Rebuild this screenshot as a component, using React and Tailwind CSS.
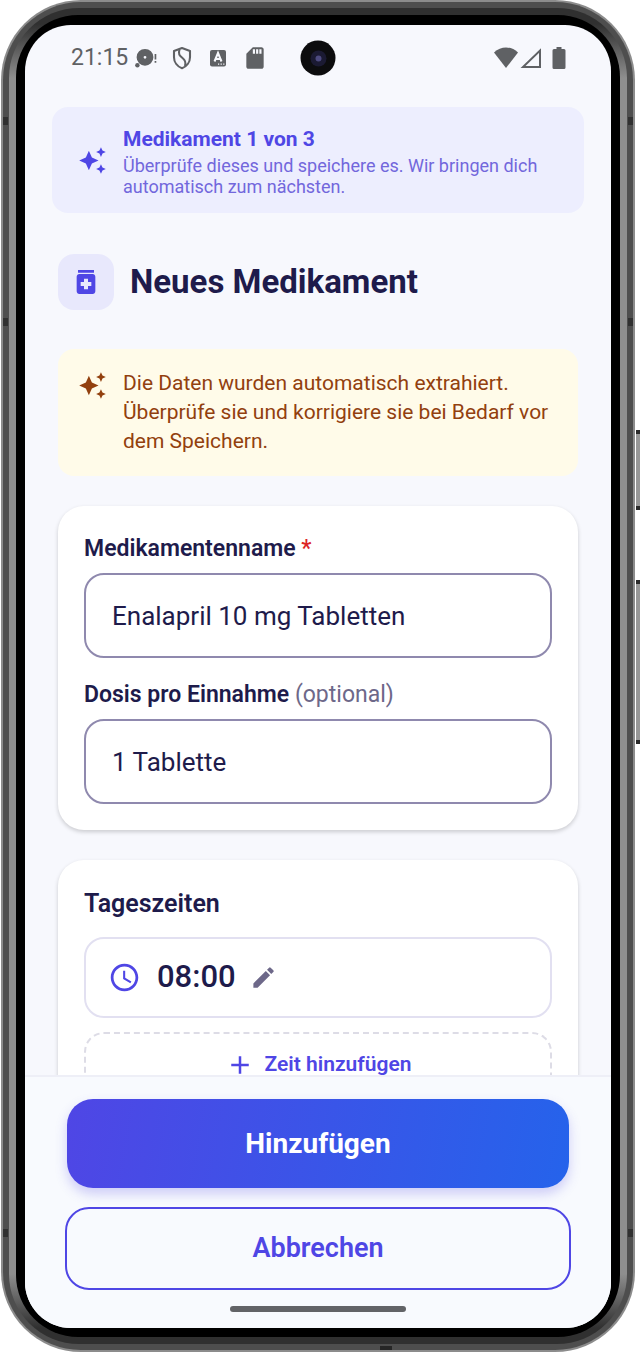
import React, { useState } from "react";
import {
  MdAccessTime,
  MdAdd,
  MdAutoAwesome,
  MdEdit,
  MdMedication,
  MdSdCard,
} from "react-icons/md";

function StatusBar() {
  return (
    <div className="relative flex h-[66px] shrink-0 items-center justify-between pl-[46px] pr-[45px] text-[#5f6164]">
      <div className="flex items-center">
        <span className="text-[23px] leading-6">21:15</span>
        <svg className="ml-1.5 h-6 w-6" viewBox="0 0 24 24" fill="currentColor" aria-hidden="true">
          <path
            fillRule="evenodd"
            d="M11 2.9a8.4 8.4 0 1 1 0 16.8 8.4 8.4 0 0 1 0-16.8zm0 7a1.4 1.4 0 1 0 0 2.8 1.4 1.4 0 0 0 0-2.8z"
          />
          <circle cx="3.4" cy="19.3" r="2.2" />
          <path d="M20.6 8h1.7v5.500h-1.700zM20.600 15h1.700v1.700h-1.700z" />
        </svg>
        <svg className="ml-3 h-6 w-6" viewBox="0 0 24 24" fill="none" stroke="currentColor" strokeWidth="2.1" aria-hidden="true">
          <path d="M12 2L4 5v6.2c0 5 3.3 9.3 8 11 4.7-1.7 8-6 8-11V5z" strokeLinejoin="round" />
          <path d="M9.5 3.500c-1.500 4.500 0 6.200 3 8.500 2.800 2.200 3.800 4 2.500 8" />
        </svg>
        <svg className="ml-3 h-6 w-6" viewBox="0 0 24 24" aria-hidden="true">
          <rect x="4" y="4" width="16" height="16.5" rx="2" fill="currentColor" />
          <path d="M8.5 15.5L12 7l3.5 8.500M9.800 13h4.400" fill="none" stroke="#f8f9fd" strokeWidth="2" />
          <path d="M12 18.2h1.200M14.600 18.2h1.200M17.200 18.2h1.200" stroke="#f8f9fd" strokeWidth="1.2" />
        </svg>
        <MdSdCard className="ml-3 h-[26px] w-[26px]" aria-hidden="true" />
      </div>

      <div className="flex items-center gap-0.5">
        <svg className="h-6 w-6" viewBox="0 0 24 24" fill="currentColor" aria-hidden="true">
          <path d="M0 6.5C7-.2 17-.2 24 6.500L12 22z" />
        </svg>
        <svg className="h-6 w-6" viewBox="0 0 24 24" fill="none" stroke="currentColor" strokeWidth="2" aria-hidden="true">
          <path d="M20 4.500V21H3z" />
        </svg>
        <svg className="ml-1.5 h-6 w-[14px]" viewBox="0 0 14 24" fill="currentColor" aria-hidden="true">
          <path d="M4.500 1h5v2h2.500a1.500 1.500 0 0 1 1.500 1.500v17a1.500 1.500 0 0 1-1.500 1.500H2a1.500 1.500 0 0 1-1.500-1.500v-17A1.500 1.500 0 0 1 2 3h2.500z" />
        </svg>
      </div>

      {/* Front camera */}
      <div className="absolute left-1/2 top-1/2 flex h-[35px] w-[35px] -translate-x-1/2 -translate-y-1/2 items-center justify-center rounded-full bg-[#0c0c0e]">
        <div className="flex h-4 w-4 items-center justify-center rounded-full bg-[#1b1a33]">
          <div className="h-1.5 w-1.5 rounded-full bg-[#4d4a80]" />
        </div>
      </div>
    </div>
  );
}

function Field({ id, label, hint, required, value, onChange }) {
  return (
    <div className="flex flex-col gap-[7px]">
      <label htmlFor={id} className="text-[23px] font-semibold leading-[34px]">
        {label}
        {required && <span className="font-medium text-[#dc2626]"> *</span>}
        {hint && <span className="font-normal text-[#6d6889]"> {hint}</span>}
      </label>
      <input
        id={id}
        type="text"
        value={value}
        onChange={(e) => onChange(e.target.value)}
        className="h-[85px] w-full rounded-[20px] border-2 border-[#8f89ae] bg-white px-[26px] text-[26px] outline-none"
      />
    </div>
  );
}

function MedicationForm() {
  const [name, setName] = useState("Enalapril 10 mg Tabletten");
  const [dose, setDose] = useState("1 Tablette");

  return (
    <main className="min-h-0 flex-1 overflow-y-auto px-[27px] pt-4 [scrollbar-width:none]">
      {/* Progress banner */}
      <div className="flex items-center gap-4 rounded-2xl bg-[#edeefe] px-[26px] py-4 text-[#4f46e5]">
        <MdAutoAwesome className="h-[29px] w-[29px] shrink-0" aria-hidden="true" />
        <div>
          <p className="text-[21px] font-bold leading-8">Medikament 1 von 3</p>
          <p className="text-lg leading-[21px] text-[#7267dc]">
            Überprüfe dieses und speichere es. Wir bringen dich automatisch zum nächsten.
          </p>
        </div>
      </div>

      <div className="px-1.5">
        <div className="mt-[41px] flex items-center gap-4">
          <div className="flex h-14 w-14 items-center justify-center rounded-2xl bg-[#e8e8fc]">
            <MdMedication className="h-8 w-8 text-[#4f46e5]" aria-hidden="true" />
          </div>
          <h1 className="text-[33px] font-bold leading-10">Neues Medikament</h1>
        </div>

        <div className="mt-[39px] flex items-start gap-4 rounded-2xl bg-[#fffbe9] p-5 text-[#92400e]">
          <MdAutoAwesome className="mt-0.5 h-[29px] w-[29px] shrink-0" aria-hidden="true" />
          <p className="text-[21px] leading-[29px]">
            Die Daten wurden automatisch extrahiert. Überprüfe sie und korrigiere sie bei Bedarf vor
            dem Speichern.
          </p>
        </div>

        <section className="mt-[30px] flex flex-col gap-5 rounded-[26px] bg-white p-[26px] shadow-[0_2px_4px_rgba(0,0,0,0.18)]">
          <Field
            id="name"
            label="Medikamentenname"
            required
            value={name}
            onChange={setName}
          />
          <Field
            id="dose"
            label="Dosis pro Einnahme"
            hint="(optional)"
            value={dose}
            onChange={setDose}
          />
        </section>

        <section className="mt-[30px] rounded-[26px] bg-white p-[26px] shadow-[0_2px_4px_rgba(0,0,0,0.18)]">
          <h2 className="text-[25px] font-semibold leading-9">Tageszeiten</h2>
          <button
            type="button"
            className="mt-[15px] flex h-[81px] w-full items-center rounded-[20px] border-2 border-[#e2e0f1] px-[22px]"
          >
            <MdAccessTime className="h-[33px] w-[33px] text-[#4f46e5]" aria-hidden="true" />
            <span className="ml-4 text-[31px] font-medium">08:00</span>
            <MdEdit className="ml-3.5 h-[27px] w-[27px] text-[#6d6889]" aria-hidden="true" />
          </button>
          <button
            type="button"
            className="mt-[14px] flex h-[66px] w-full items-center justify-center gap-2.5 rounded-[20px] border-2 border-dashed border-[#dddce6] text-[21px] font-semibold text-[#4f46e5]"
          >
            <MdAdd className="h-[30px] w-[30px]" aria-hidden="true" />
            Zeit hinzufügen
          </button>
        </section>
      </div>
    </main>
  );
}

function Footer() {
  return (
    <footer className="flex shrink-0 flex-col items-stretch border-t-2 border-[#eeeff7] bg-[#f8fafe] px-10 pb-4 pt-[22px]">
      <button
        type="button"
        className="mx-0.5 h-[89px] rounded-[26px] bg-[linear-gradient(100deg,#4f46e5,#2563eb)] text-[28px] font-bold text-white shadow-[0_6px_12px_rgba(79,70,229,0.25)]"
      >
        Hinzufügen
      </button>
      <button
        type="button"
        className="mt-[19px] h-[83px] rounded-3xl border-2 border-[#4f46e5] bg-[#f8fafe] text-[27px] font-semibold text-[#4f46e5]"
      >
        Abbrechen
      </button>
      <div className="mx-auto mt-4 h-1.5 w-44 rounded-full bg-[#626367]" />
    </footer>
  );
}

// Hardware details that sit on top of the phone's rim
function FrameDetails() {
  return (
    <div aria-hidden="true">
      <div className="absolute right-0 top-[430px] h-20 w-1 border-y-4 border-[#2a2a2a] bg-[#979797]" />
      <div className="absolute right-0 top-[580px] h-[164px] w-1 border-y-4 border-[#2a2a2a] bg-[#979797]" />
      <div className="absolute left-[3px] top-[117px] h-2 w-[5px] bg-[#303030]" />
      <div className="absolute left-[3px] top-[318px] h-2 w-[5px] bg-[#303030]" />
      <div className="absolute bottom-[115px] left-[3px] h-2 w-[5px] bg-[#303030]" />
      <div className="absolute right-[7px] top-[117px] h-2 w-[5px] bg-[#303030]" />
      <div className="absolute right-[7px] top-[318px] h-2 w-[5px] bg-[#303030]" />
      <div className="absolute bottom-[115px] right-[7px] h-2 w-[5px] bg-[#303030]" />
      <div className="absolute bottom-[2px] left-[380px] h-1 w-3 bg-[#262626]" />
    </div>
  );
}

export default function App() {
  return (
    <div className="relative h-screen overflow-hidden bg-white pl-px pr-[5px] font-['Roboto',sans-serif] text-[#1e1b4b]">
      {/* Metal rim, drawn as nested rings */}
      <div className="h-full rounded-[80px] bg-[#8c8c8c] p-0.5">
        <div className="h-full rounded-[78px] bg-[#4e4e4e] p-1.5">
          <div className="h-full rounded-[70px] bg-[linear-gradient(#303030,#303030_16px,#8e8e8e_70px,#8e8e8e_calc(100%-70px),#303030_calc(100%-16px),#303030)] p-[7px]">
            <div className="h-full rounded-[62px] bg-black px-[9px] pb-[9px] pt-2.5">
              <div className="flex h-full flex-col overflow-hidden rounded-[46px] bg-[#f7f8fd]">
                <StatusBar />
                <MedicationForm />
                <Footer />
              </div>
            </div>
          </div>
        </div>
      </div>
      <FrameDetails />
    </div>
  );
}
